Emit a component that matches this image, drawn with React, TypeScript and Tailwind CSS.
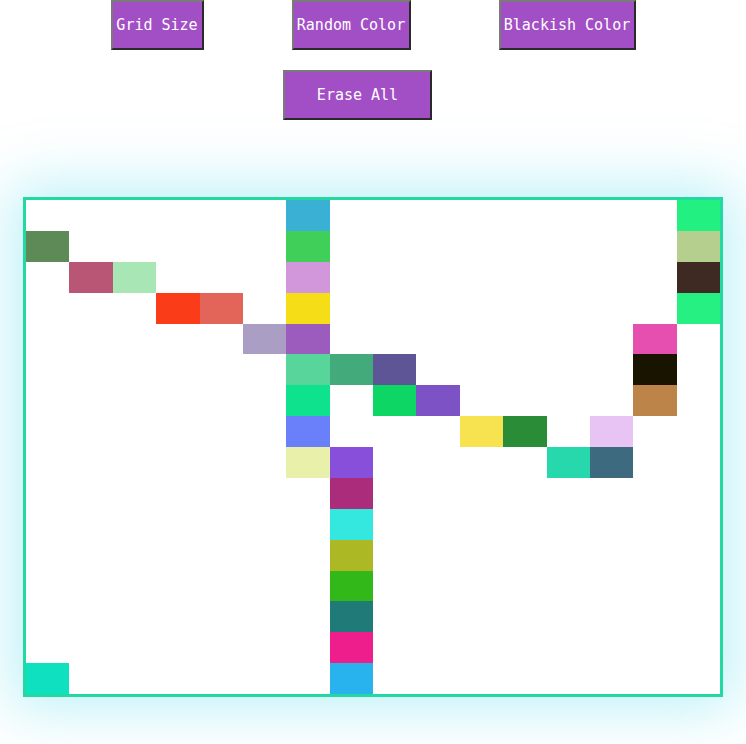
import React from 'react';

const SIZE = 16;

// painted cells: [row, col, colour]
const painted: [number, number, string][] = [
  [0, 6, '#3ab0d4'], [0, 15, '#22f080'],
  [1, 0, '#5e8a58'], [1, 6, '#40cf58'], [1, 15, '#b5d08e'],
  [2, 1, '#b95676'], [2, 2, '#a8e6b5'], [2, 6, '#d197da'], [2, 15, '#3e2a22'],
  [3, 3, '#fa3c18'], [3, 4, '#e3655a'], [3, 6, '#f5de18'], [3, 15, '#26f082'],
  [4, 5, '#ab9ec4'], [4, 6, '#9c5cbe'], [4, 14, '#e64fb0'],
  [5, 6, '#58d59a'], [5, 7, '#43aa7c'], [5, 8, '#5e5596'], [5, 14, '#181400'],
  [6, 6, '#0ee28c'], [6, 8, '#0ed665'], [6, 9, '#7c52c4'], [6, 14, '#bc8448'],
  [7, 6, '#6a80fb'], [7, 10, '#f7e250'], [7, 11, '#2a8c36'], [7, 13, '#e8c4f4'],
  [8, 6, '#e8f0aa'], [8, 7, '#8850da'], [8, 12, '#26d8ac'], [8, 13, '#3e6a80'],
  [9, 7, '#aa2c7a'],
  [10, 7, '#34e8e0'],
  [11, 7, '#acb824'],
  [12, 7, '#33b81a'],
  [13, 7, '#1f7a78'],
  [14, 7, '#ee1e8c'],
  [15, 0, '#0ee0c0'], [15, 7, '#28b2ee'],
];

const colorAt = (r: number, c: number) => {
  const hit = painted.find(([pr, pc]) => pr === r && pc === c);
  return hit ? hit[2] : '#ffffff';
};

const Btn = ({ label, className = '' }: { label: string; className?: string }) => (
  <button
    className={`h-[50px] bg-[#a24fc6] text-white text-[15px] border-2 border-t-[#7a7a7a] border-l-[#7a7a7a] border-r-[#2a2a2a] border-b-[#2a2a2a] ${className}`}
    style={{ fontFamily: '"DejaVu Sans Mono", "Liberation Mono", monospace' }}
  >
    {label}
  </button>
);

export default function App() {
  const cells = [];
  for (let r = 0; r < SIZE; r++) {
    for (let c = 0; c < SIZE; c++) {
      cells.push(<div key={`${r}-${c}`} style={{ backgroundColor: colorAt(r, c) }} />);
    }
  }

  return (
    <div className="w-[746px] h-[744px] bg-white overflow-hidden">
      <div className="flex justify-center gap-[88px]">
        <Btn label="Grid Size" className="w-[93px]" />
        <Btn label="Random Color" className="w-[119px]" />
        <Btn label="Blackish Color" className="w-[137px]" />
      </div>
      <div className="flex justify-center mt-[20px]">
        <Btn label="Erase All" className="w-[149px] mr-[31px]" />
      </div>
      <div className="flex justify-center mt-[77px]">
        <div className="w-[700px] h-[500px] border-[3px] border-[#22d9a2] grid grid-cols-16 grid-rows-16 bg-white shadow-[0_0_55px_12px_rgba(70,215,235,0.35)]">
          {cells}
        </div>
      </div>
    </div>
  );
}
